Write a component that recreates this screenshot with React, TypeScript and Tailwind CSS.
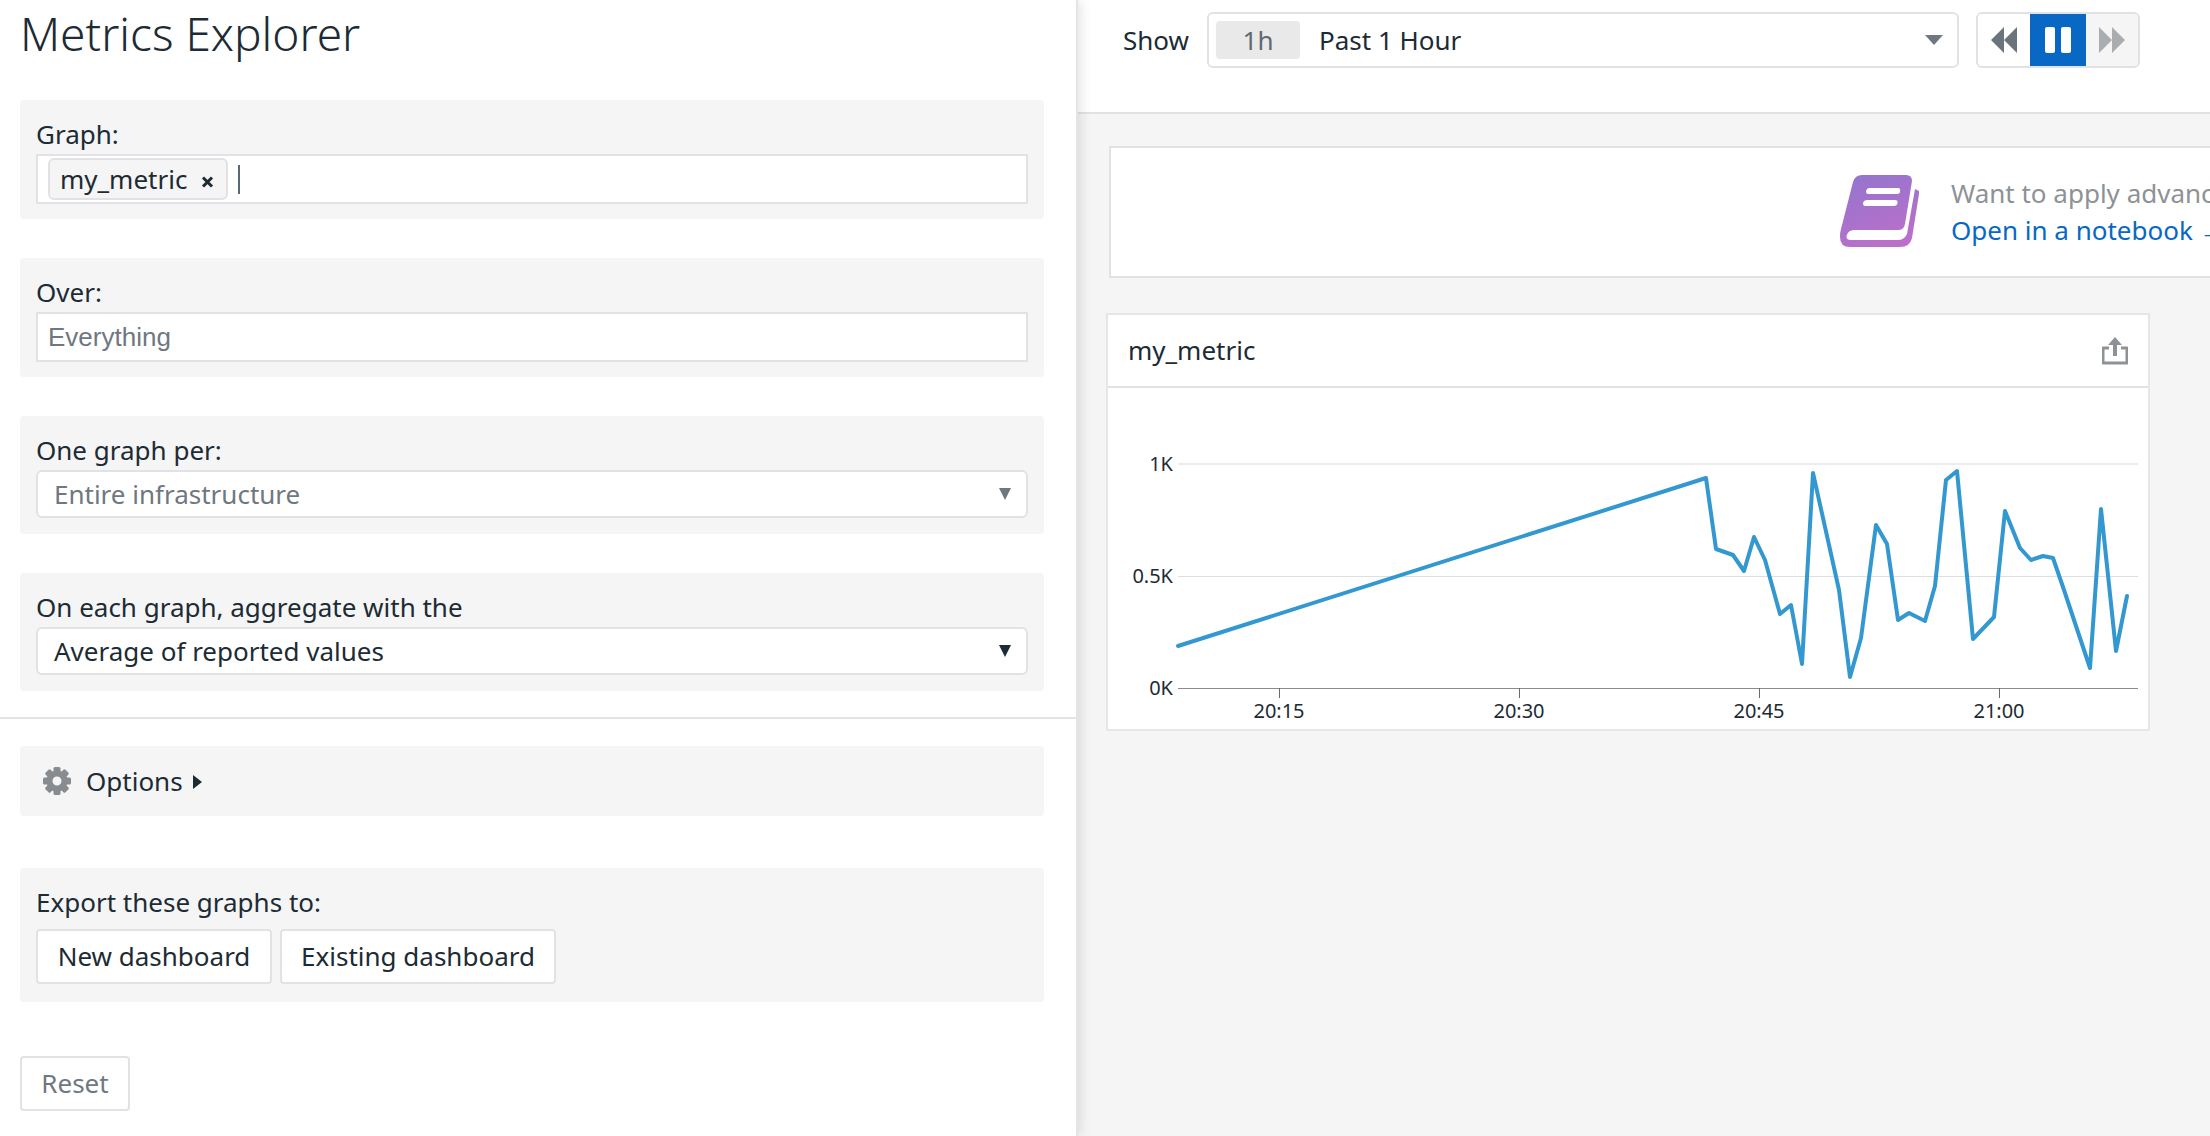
const points =
  "1178,646 1706,478 1716,549 1733,555 1744,571 1754,537 1765,560 1780,614 1791,605 1802,664 1813,473 1839,590 1850,677 1861,638 1876,525 1887,544 1898,620 1909,613 1925,621 1935,586 1946,480 1957,471 1973,639 1994,617 2005,511 2020,548 2031,560 2043,556 2053,558 2064,590 2090,668 2101,509 2116,651 2127,596";

function Section({ label, children, extra }: { label: string; children: React.ReactNode; extra?: boolean }) {
  return (
    <div className={extra ? "mr-8 ml-5 rounded bg-[#f5f5f5] px-4 pt-[18px] pb-4" : "mr-8 ml-5 rounded bg-[#f5f5f5] px-4 pt-[18px] pb-[15px]"}>
      <div className="mb-1 h-8 text-[26px] leading-8 text-[#1c2b34]">{label}</div>
      {children}
    </div>
  );
}

function Select({ value, muted }: { value: string; muted?: boolean }) {
  return (
    <div className="flex h-12 items-center justify-between rounded-md border-2 border-[#e2e2e6] bg-white pr-[15px] pl-4">
      <span className={muted ? "text-[26px] text-[#6f7880]" : "text-[26px] text-[#1c2b34]"}>{value}</span>
      <svg width="12" height="12" viewBox="0 0 12 12">
        <path d="M0 0h12L6 12z" fill={muted ? "#6f7880" : "#1c2b34"} />
      </svg>
    </div>
  );
}

function GearIcon() {
  return (
    <svg width="28" height="28" viewBox="0 0 28 28" className="shrink-0">
      {[0, 45, 90, 135, 180, 225, 270, 315].map((a) => (
        <rect key={a} x="10.500" y="0" width="7" height="8" rx="1.500" fill="#878c91" transform={`rotate(${a} 14 14)`} />
      ))}
      <circle cx="14" cy="14" r="7.500" fill="none" stroke="#878c91" strokeWidth="6" />
    </svg>
  );
}

function Chart() {
  return (
    <svg width="1040" height="341" viewBox="1108 388 1040 341" className="block">
      <line x1="1178" x2="2138" y1="464" y2="464" stroke="#ececee" strokeWidth="2" />
      <line x1="1178" x2="2138" y1="576.500" y2="576.500" stroke="#dfdfe2" />
      <line x1="1178" x2="2138" y1="688.500" y2="688.500" stroke="#888c90" />
      {[1279, 1519, 1759, 1999].map((x) => (
        <line key={x} x1={x + 0.5} x2={x + 0.5} y1="688" y2="698" stroke="#666b70" />
      ))}
      <g fontSize="20" fill="#1c2b34" textAnchor="end">
        <text x="1173" y="471">1K</text>
        <text x="1173" y="583">0.5K</text>
        <text x="1173" y="695">0K</text>
      </g>
      <g fontSize="20" fill="#1c2b34" textAnchor="middle">
        <text x="1279" y="718">20:15</text>
        <text x="1519" y="718">20:30</text>
        <text x="1759" y="718">20:45</text>
        <text x="1999" y="718">21:00</text>
      </g>
      <polyline points={points} fill="none" stroke="#3498d0" strokeWidth="4" strokeLinejoin="round" strokeLinecap="round" />
    </svg>
  );
}

function BookIcon() {
  return (
    <svg width="80" height="74" viewBox="0 0 80 74" className="mb-[3px] shrink-0">
      <defs>
        <linearGradient id="book" x1="0.3" y1="0" x2="0.7" y2="1">
          <stop offset="0" stopColor="#9575cd" />
          <stop offset="1" stopColor="#bd6fca" />
        </linearGradient>
      </defs>
      <path
        fillRule="evenodd"
        fill="url(#book)"
        d="M22 1H66Q72 1 72 7L65 50Q64 56 58 56H14Q8 56 6.500 62Q6 66 11 66H58Q64 66 67 60L75 15L79 17V20L72 64Q70 73 60 73H10Q0 73 0 63Q0 58 1 55L13 8Q15 1 22 1ZM29 14H58Q61 14 60 17.500Q60 20 57 20H28Q26 20 26 17Q27 14 29 14ZM27 26H55Q58 26 57.500 29Q57 32 54 32H25Q23 32 23 29Q24 26 27 26Z"
      />
    </svg>
  );
}

export default function App() {
  return (
    <div className="flex h-[1136px] w-[2210px] overflow-hidden bg-white font-['Noto_Sans',sans-serif]">
      {/* Query panel */}
      <div className="relative z-10 w-[1078px] shrink-0 border-r-2 border-[#e4e4e6] bg-white shadow-[2px_0_12px_rgba(0,0,0,0.12)]">
        <h1 className="h-[100px] pt-[6px] pl-5 text-[46px] leading-[54px] font-light text-[#1c2b34]">Metrics Explorer</h1>

        <Section label="Graph:">
          <div className="flex h-[50px] items-center border-2 border-[#e2e2e6] bg-white pl-[10px]">
            <span className="flex h-[42px] w-[180px] items-center rounded-md border-2 border-[#e2e2e6] bg-[#f5f5f5] pl-[10px] text-[26px] text-[#1c2b34]">
              my_metric
              <svg width="13" height="12" viewBox="0 0 13 12" className="mt-[5px] ml-[14px]">
                <path d="M2 1.500l9 9M11 1.500l-9 9" stroke="#1c2b34" strokeWidth="3" />
              </svg>
            </span>
            <span className="ml-[10px] h-[29px] w-0.5 bg-[#5a6a75]" />
          </div>
        </Section>

        <div className="mt-[39px]">
          <Section label="Over:">
            <div className="flex h-[50px] items-center border-2 border-[#e2e2e6] bg-white pl-[10px] font-['Liberation_Sans',sans-serif] text-[26px] text-[#6f7880]">
              Everything
            </div>
          </Section>
        </div>

        <div className="mt-[39px]">
          <Section label="One graph per:" extra>
            <Select value="Entire infrastructure" muted />
          </Section>
        </div>

        <div className="mt-[39px]">
          <Section label="On each graph, aggregate with the" extra>
            <Select value="Average of reported values" />
          </Section>
        </div>

        <div className="mt-[26px] h-0.5 bg-[#e4e4e6]" />

        <div className="mt-[27px] mr-8 ml-5 flex h-[70px] items-center rounded bg-[#f5f5f5] pl-[23px] text-[26px] text-[#1c2b34]">
          <GearIcon />
          <span className="ml-[15px]">Options</span>
          <svg width="9" height="14" viewBox="0 0 9 14" className="mt-[2px] ml-[10px]">
            <path d="M0 0l9 7-9 7z" fill="#1c2b34" />
          </svg>
        </div>

        <div className="mt-[52px] mr-8 ml-5 h-[134px] rounded bg-[#f5f5f5] px-4 pt-[18px]">
          <div className="mb-[11px] h-8 text-[26px] leading-8 text-[#1c2b34]">Export these graphs to:</div>
          <div className="flex gap-2">
            <button className="h-[55px] w-[236px] rounded border-2 border-[#e2e2e6] bg-white text-[26px] text-[#1c2b34]">New dashboard</button>
            <button className="h-[55px] w-[276px] rounded border-2 border-[#e2e2e6] bg-white text-[26px] text-[#1c2b34]">Existing dashboard</button>
          </div>
        </div>

        <button className="mt-[54px] ml-5 h-[55px] w-[110px] rounded border-2 border-[#e2e2e6] bg-white text-[26px] text-[#6f7880]">Reset</button>
      </div>

      {/* Results */}
      <div className="min-w-0 flex-1 overflow-hidden bg-[#f5f5f5]">
        <div className="flex h-[114px] items-start border-b-2 border-[#e2e2e6] bg-white pt-3 pl-[45px]">
          <span className="flex h-14 w-[84px] items-center text-[26px] text-[#1c2b34]">Show</span>
          <div className="flex h-14 w-[752px] items-center rounded-md border-2 border-[#e2e2e6] pl-[7px]">
            <span className="flex h-[38px] w-[84px] items-center justify-center rounded bg-[#e9e9e9] text-[26px] text-[#5f6a72]">1h</span>
            <span className="ml-[19px] flex-1 text-[26px] text-[#1c2b34]">Past 1 Hour</span>
            <svg width="18" height="10" viewBox="0 0 18 10" className="mr-[14px]">
              <path d="M0 0h18L9 10z" fill="#6f7880" />
            </svg>
          </div>
          <div className="ml-[17px] flex h-14 w-[164px] overflow-hidden rounded-md border-2 border-[#e2e2e6]">
            <span className="flex w-[52px] items-center justify-center bg-white">
              <svg width="26" height="26" viewBox="0 0 26 26">
                <path d="M13 0v26L0 13zM26 0v26L13 13z" fill="#6b747b" />
              </svg>
            </span>
            <span className="flex w-14 items-center justify-center gap-[6px] bg-[#0868c4]">
              <span className="h-[26px] w-[10px] rounded-[2px] bg-white" />
              <span className="h-[26px] w-[10px] rounded-[2px] bg-white" />
            </span>
            <span className="flex flex-1 items-center justify-center bg-[#f5f5f5]">
              <svg width="26" height="26" viewBox="0 0 26 26">
                <path d="M0 0v26l13-13zM13 0v26l13-13z" fill="#a9adb0" />
              </svg>
            </span>
          </div>
        </div>

        <div className="mt-8 ml-[31px] flex h-[132px] w-[1200px] items-center border-2 border-[#e2e2e6] bg-white pl-[729px]">
          <BookIcon />
          <div className="ml-[31px] text-[26px] leading-[37px] whitespace-nowrap">
            <div className="text-[#8d9296]">Want to apply advanced functions and more?</div>
            <div className="text-[#0868c4]">Open in a notebook →</div>
          </div>
        </div>

        <div className="mt-[35px] ml-[28px] w-[1044px] border-2 border-[#e6e6e8] bg-white">
          <div className="flex h-[73px] items-center justify-between border-b-2 border-[#e2e2e6] pr-[20px] pl-5">
            <span className="text-[26px] text-[#1c2b34]">my_metric</span>
            <svg width="26" height="28" viewBox="0 0 26 28">
              <path d="M13 0l7 8h-5v11h-4V8H6z" fill="#8d9296" />
              <path d="M7 11H1v15h24V11h-6" fill="none" stroke="#8d9296" strokeWidth="3" strokeLinejoin="round" />
            </svg>
          </div>
          <Chart />
        </div>
      </div>
    </div>
  );
}
